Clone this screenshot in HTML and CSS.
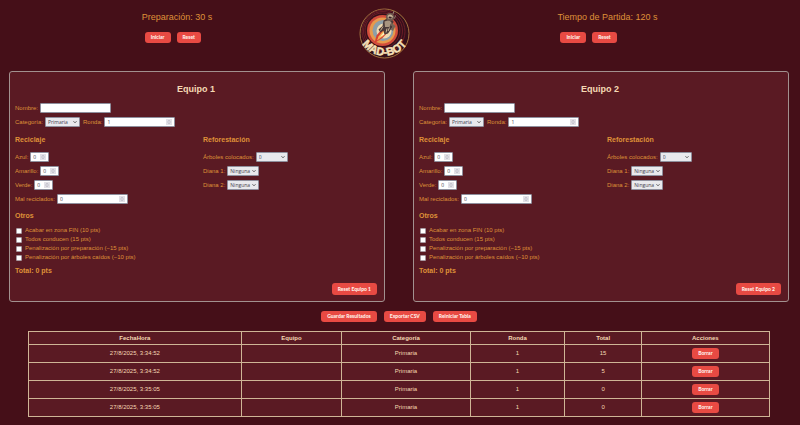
FILE: index.html
```html
<!DOCTYPE html>
<html lang="es">
<head>
<meta charset="utf-8">
<title>Mad-Bot</title>
<link rel="stylesheet" href="styles.css">
</head>
<body>
<header class="top">
  <section class="timer">
    <p class="clock">Preparación: 30 s</p>
    <div class="timer-buttons"><button class="btn">Iniciar</button><button class="btn">Reset</button></div>
  </section>
  <svg class="logo" viewBox="0 0 102 102" role="img" aria-label="Mad-Bot">
    <defs><path id="arc" d="M4 68 A54 54 0 0 0 98 68"/></defs>
    <circle cx="51" cy="51" r="49" fill="#35101a" stroke="#a5743f" stroke-width="2"/>
    <g fill="none" stroke="#6b1c27" stroke-width="2">
      <circle cx="49" cy="47" r="43"/><circle cx="48" cy="46" r="39"/><circle cx="47" cy="45" r="35"/>
    </g>
    <circle cx="47" cy="45" r="31" fill="#d24d3c"/>
    <circle cx="47" cy="45" r="26" fill="#e79a4c"/>
    <circle cx="48" cy="45" r="21" fill="#8d9fa8"/>
    <circle cx="50" cy="46" r="15" fill="#efd9b0"/>
    <g transform="translate(3 -7)">
      <path d="M42 50 L32 62 L28 77 L44 67 L58 52Z" fill="#d63f31"/>
      <path d="M45 53 L36 64 L33 72 L44 64 L53 55Z" fill="#f3b254"/>
      <path d="M47 55 L39 65 L48 60Z" fill="#fff0c5"/>
      <path d="M46 32 L55 27 L66 33 L64 45 L55 58 L48 60 L46 52 L40 56 L36 50 L44 43Z" fill="#4a3938"/>
      <path d="M48 34 L57 31 L62 36 L58 45 L49 45Z" fill="#a89580"/>
      <path d="M62 36 L70 43 L65 53 L61 50 L64 44 L59 41Z" fill="#766456"/>
      <path d="M45 44 L40 52 M53 48 L51 56 M58 46 L55 53" stroke="#c9b394" stroke-width="2"/>
      <circle cx="59" cy="25" r="8" fill="#6e5b50"/>
      <path d="M54 23 Q60 17 65 24 L63 28 L55 28Z" fill="#c9b394"/>
      <path d="M57 24 L63 25 L61 28 L56 27Z" fill="#35202a"/>
      <path d="M65 19 L67 13 M68 28 L70 22" stroke="#958273" stroke-width="2"/>
    </g>
    <text class="logo-text"><textPath href="#arc" startOffset="50%">MAD-BOT</textPath></text>
  </svg>
  <section class="timer">
    <p class="clock">Tiempo de Partida: 120 s</p>
    <div class="timer-buttons"><button class="btn">Iniciar</button><button class="btn">Reset</button></div>
  </section>
</header>

<main>
  <div class="teams">
    <form class="card">
      <h2>Equipo 1</h2>
      <div class="rows">
        <div class="row"><label for="n1">Nombre:</label><input id="n1" class="field" type="text"></div>
        <div class="row"><label for="c1">Categoría:</label><select id="c1" class="field category"><option>Primaria</option></select><label for="r1">Ronda:</label><input id="r1" class="field" type="number" value="1"></div>
      </div>
      <div class="columns">
        <section>
          <h3>Reciclaje</h3>
          <div class="rows">
            <div class="row"><label for="az1">Azul:</label><input id="az1" class="field small" type="number" value="0"></div>
            <div class="row"><label for="am1">Amarillo:</label><input id="am1" class="field small" type="number" value="0"></div>
            <div class="row"><label for="ve1">Verde:</label><input id="ve1" class="field small" type="number" value="0"></div>
            <div class="row"><label for="ma1">Mal reciclados:</label><input id="ma1" class="field" type="number" value="0"></div>
          </div>
        </section>
        <section>
          <h3>Reforestación</h3>
          <div class="rows">
            <div class="row"><label for="ar1">Árboles colocados:</label><select id="ar1" class="field choice"><option>0</option></select></div>
            <div class="row"><label for="da1">Diana 1:</label><select id="da1" class="field choice"><option>Ninguna</option></select></div>
            <div class="row"><label for="db1">Diana 2:</label><select id="db1" class="field choice"><option>Ninguna</option></select></div>
          </div>
        </section>
      </div>
      <h3 class="others">Otros</h3>
      <div class="checks">
        <label><input type="checkbox">Acabar en zona FIN (10 pts)</label>
        <label><input type="checkbox">Todos conducen (15 pts)</label>
        <label><input type="checkbox">Penalización por preparación (−15 pts)</label>
        <label><input type="checkbox">Penalización por árboles caídos (−10 pts)</label>
      </div>
      <p class="total">Total: 0 pts</p>
      <button type="reset" class="btn reset">Reset Equipo 1</button>
    </form>

    <form class="card">
      <h2>Equipo 2</h2>
      <div class="rows">
        <div class="row"><label for="n2">Nombre:</label><input id="n2" class="field" type="text"></div>
        <div class="row"><label for="c2">Categoría:</label><select id="c2" class="field category"><option>Primaria</option></select><label for="r2">Ronda:</label><input id="r2" class="field" type="number" value="1"></div>
      </div>
      <div class="columns">
        <section>
          <h3>Reciclaje</h3>
          <div class="rows">
            <div class="row"><label for="az2">Azul:</label><input id="az2" class="field small" type="number" value="0"></div>
            <div class="row"><label for="am2">Amarillo:</label><input id="am2" class="field small" type="number" value="0"></div>
            <div class="row"><label for="ve2">Verde:</label><input id="ve2" class="field small" type="number" value="0"></div>
            <div class="row"><label for="ma2">Mal reciclados:</label><input id="ma2" class="field" type="number" value="0"></div>
          </div>
        </section>
        <section>
          <h3>Reforestación</h3>
          <div class="rows">
            <div class="row"><label for="ar2">Árboles colocados:</label><select id="ar2" class="field choice"><option>0</option></select></div>
            <div class="row"><label for="da2">Diana 1:</label><select id="da2" class="field choice"><option>Ninguna</option></select></div>
            <div class="row"><label for="db2">Diana 2:</label><select id="db2" class="field choice"><option>Ninguna</option></select></div>
          </div>
        </section>
      </div>
      <h3 class="others">Otros</h3>
      <div class="checks">
        <label><input type="checkbox">Acabar en zona FIN (10 pts)</label>
        <label><input type="checkbox">Todos conducen (15 pts)</label>
        <label><input type="checkbox">Penalización por preparación (−15 pts)</label>
        <label><input type="checkbox">Penalización por árboles caídos (−10 pts)</label>
      </div>
      <p class="total">Total: 0 pts</p>
      <button type="reset" class="btn reset">Reset Equipo 2</button>
    </form>
  </div>

  <div class="actions">
    <button class="btn">Guardar Resultados</button>
    <button class="btn">Exportar CSV</button>
    <button class="btn">Reiniciar Tabla</button>
  </div>

  <div class="results">
    <table>
      <colgroup><col class="w-date"><col class="w-team"><col class="w-cat"><col class="w-round"><col class="w-total"><col></colgroup>
      <thead><tr><th>FechaHora</th><th>Equipo</th><th>Categoría</th><th>Ronda</th><th>Total</th><th>Acciones</th></tr></thead>
      <tbody>
        <tr><td>27/8/2025, 3:34:52</td><td></td><td>Primaria</td><td>1</td><td>15</td><td><button class="btn">Borrar</button></td></tr>
        <tr><td>27/8/2025, 3:34:52</td><td></td><td>Primaria</td><td>1</td><td>5</td><td><button class="btn">Borrar</button></td></tr>
        <tr><td>27/8/2025, 3:35:05</td><td></td><td>Primaria</td><td>1</td><td>0</td><td><button class="btn">Borrar</button></td></tr>
        <tr><td>27/8/2025, 3:35:05</td><td></td><td>Primaria</td><td>1</td><td>0</td><td><button class="btn">Borrar</button></td></tr>
      </tbody>
    </table>
  </div>
</main>
</body>
</html>
```
FILE: styles.css
```css
* { box-sizing: border-box; }

body {
  margin: 0;
  background: #450f18;
  color: #df9138;
  font: 6px/9px "Liberation Sans", Arial, sans-serif;
}

h2, h3, p { margin: 0; }

.top {
  display: grid;
  grid-template-columns: 354fr 61fr 385fr;
  justify-items: center;
  padding: 8px 0 12px;
}

.logo { width: 51px; height: 51px; overflow: visible; }

.logo-text {
  font: bold 22px "Liberation Sans", Arial, sans-serif;
  fill: #f5e0b8;
  stroke: #f5e0b8;
  stroke-width: 1px;
  text-anchor: middle;
}

.clock { padding-top: 3px; font-size: 9px; line-height: 12px; }

.timer-buttons {
  display: flex;
  gap: 6px;
  margin-top: 9px;
  padding-left: 3px;
}

.btn {
  height: 11px;
  padding: 0 6px;
  border: 0;
  border-radius: 3px;
  background: #e84a43;
  color: #fff0e8;
  font: 900 5px/11px Lato, "Open Sans", sans-serif;
  cursor: pointer;
}

main { padding: 0 11px 0 9px; }

.teams {
  display: grid;
  grid-template-columns: 1fr 1fr;
  gap: 28px;
}

.card {
  padding: 11px 7px 6px 5px;
  border: 1px solid #a2918f;
  border-radius: 3px;
  background: #5a1a23;
}

.card h2 {
  margin-bottom: 8px;
  color: #f5d9b4;
  font-size: 9px;
  line-height: 12px;
  text-align: center;
}

.card h3 { font-size: 7px; line-height: 9px; }

.rows { display: grid; gap: 4px; }

.row { display: flex; align-items: center; gap: 2px; height: 10px; }

.columns {
  display: grid;
  grid-template-columns: 1fr 1fr;
  gap: 14px;
  margin-top: 8px;
}

.columns .rows { margin-top: 8px; }

.field {
  width: 71px;
  height: 10px;
  padding: 0 2px;
  border: 1px solid #8f8f9d;
  border-radius: 1px;
  background: #fff;
  color: #44424e;
  font: 5px/8px "Open Sans", "Noto Sans", sans-serif;
}

.field[type="number"] {
  appearance: textfield;
  background: #fff url("data:image/svg+xml,%3Csvg xmlns='http://www.w3.org/2000/svg' viewBox='0 0 12 12'%3E%3Cpath fill='%23e2e1e7' d='M0 0h12v12H0z'/%3E%3Cpath fill='none' stroke='%23777580' d='M4 5l2-2 2 2M4 7l2 2 2-2'/%3E%3C/svg%3E") no-repeat right 2px center / 6px 6px;
}

.field[type="number"]::-webkit-inner-spin-button { display: none; }

select.field {
  appearance: none;
  background: #e9e9ed url("data:image/svg+xml,%3Csvg xmlns='http://www.w3.org/2000/svg' viewBox='0 0 8 8'%3E%3Cpath fill='none' stroke='%23333' stroke-width='1.6' d='M1 2.500l3 3 3-3'/%3E%3C/svg%3E") no-repeat right 2px center / 4px 4px;
}

.field.category { width: 35px; }
.field.choice { width: 32px; }
.field.small { width: 19px; }
.category + label { margin-left: 1px; }

.card .others { margin: 7px 0 6px; }

.checks { display: grid; }

.checks label { display: flex; align-items: center; gap: 3px; }

.checks input {
  appearance: none;
  width: 6px;
  height: 6px;
  margin: 0 0 0 1px;
  border: 1px solid #a99ba3;
  border-radius: 1px;
  background: #fff;
}

.checks input:checked { background: #e84a43; }

.total { margin-top: 4px; font-size: 7px; font-weight: bold; }

.reset { display: block; height: 12px; margin: 8px 0 0 auto; }

.actions {
  display: flex;
  justify-content: center;
  gap: 7px;
  margin: 9px 0;
}

.results { padding: 0 19px; }

table {
  width: 100%;
  border-collapse: collapse;
  table-layout: fixed;
  background: #5a1a23;
  color: #f5d9b4;
  text-align: center;
}

th, td { height: 18px; padding: 0; border: 1px solid #cfb596; }
th { height: 13px; }
td .btn { display: block; margin: 0 auto; }

.w-date { width: 28.7%; }
.w-team { width: 13.6%; }
.w-cat { width: 17.3%; }
.w-round { width: 12.8%; }
.w-total { width: 10.3%; }
```
